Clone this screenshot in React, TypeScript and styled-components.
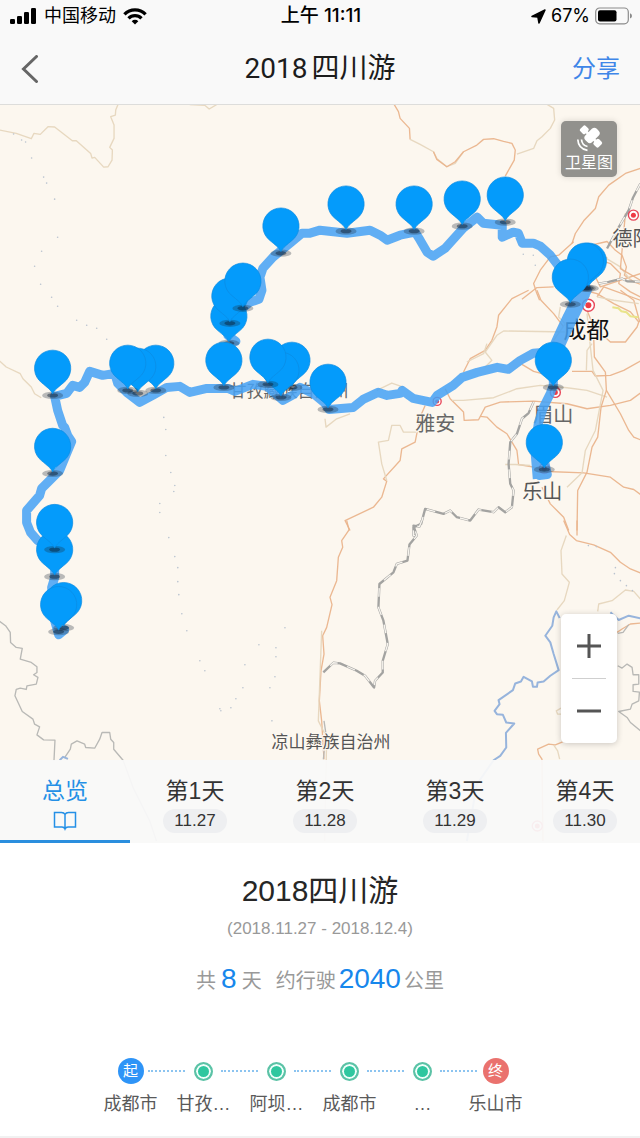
import React, { useState } from "react";
import styled, { createGlobalStyle } from "styled-components";

const latin = '"Liberation Sans", "Noto Sans CJK SC", sans-serif';
const system = 'Inter, "Noto Sans CJK SC", sans-serif';
const heading = 'Roboto, "Noto Sans CJK SC", sans-serif';

const GlobalStyle = createGlobalStyle`
  *, *::before, *::after { box-sizing: border-box; }
  body { margin: 0; background: #fff; font-family: ${latin}; color: #2b2b2b; }
  button { border: 0; padding: 0; margin: 0; background: none; font: inherit; color: inherit; cursor: pointer; }
`;

const Page = styled.div`
  display: flex;
  flex-direction: column;
  min-height: 100vh;
`;

const TopBar = styled.header`
  background: #f9f9f9;
  border-bottom: 1px solid #dddddb;
`;

const StatusBar = styled.div`
  display: grid;
  grid-template-columns: 1fr auto 1fr;
  align-items: center;
  height: 32px;
  padding: 0 8px 0 10px;
  font-family: ${system};
  font-size: 18px;
  line-height: 24px;
  color: #000;
`;

const StatusGroup = styled.div<{ $end?: boolean }>`
  display: flex;
  align-items: center;
  justify-content: ${(p) => (p.$end ? "flex-end" : "flex-start")};
  gap: ${(p) => (p.$end ? 5 : 7)}px;
`;

const Clock = styled.time`
  font-size: 19px;
  font-weight: 500;
`;

const NavBar = styled.nav`
  display: grid;
  grid-template-columns: 1fr auto 1fr;
  align-items: center;
  height: 72px;
  padding: 2px 20px 0;
`;

const BackButton = styled.button`
  justify-self: start;
  display: flex;
`;

const NavTitle = styled.h1`
  display: flex;
  gap: 4px;
  margin: 0;
  font-family: ${heading};
  font-size: 28px;
  line-height: 40px;
  font-weight: 400;
  color: #1c1c1c;
`;

const ShareLink = styled.a`
  justify-self: end;
  font-size: 24px;
  line-height: 32px;
  color: #3f86e8;
  text-decoration: none;
`;

const MapArea = styled.section`
  position: relative;
  flex: 1 0 480px;
  overflow: hidden;
  background: #fcf7ef;
`;

const MapCanvas = styled.svg`
  position: absolute;
  inset: 0;
  width: 100%;
  height: 100%;
  font-family: "Noto Sans CJK SC", sans-serif;
`;

const SatelliteButton = styled.button`
  position: absolute;
  top: 16px;
  right: 23px;
  display: flex;
  flex-direction: column;
  align-items: center;
  width: 56px;
  height: 56px;
  padding-top: 4px;
  border-radius: 5px;
  background: #92918d;
  box-shadow: 0 0 6px rgba(0, 0, 0, 0.15);
  color: #fff;
  font-size: 16px;
  line-height: 20px;
`;

const ZoomBox = styled.div`
  position: absolute;
  right: 23px;
  bottom: 100px;
  display: flex;
  flex-direction: column;
  align-items: center;
  width: 56px;
  border-radius: 5px;
  background: #fff;
  box-shadow: 0 1px 6px rgba(0, 0, 0, 0.2);
`;

const ZoomButton = styled.button`
  display: flex;
  align-items: center;
  justify-content: center;
  width: 100%;
  height: 64px;
`;

const ZoomDivider = styled.span`
  width: 34px;
  height: 1px;
  background: #cfcfcf;
`;

const Tabs = styled.div`
  position: absolute;
  left: 0;
  right: 0;
  bottom: 0;
  display: flex;
  overflow-x: auto;
  scrollbar-width: none;
  background: rgba(249, 249, 249, 0.94);
`;

const Tab = styled.button<{ $active: boolean }>`
  flex: 0 0 130px;
  display: flex;
  flex-direction: column;
  align-items: center;
  height: 83px;
  padding-top: 15px;
  border-bottom: 3px solid ${(p) => (p.$active ? "#2a8ede" : "transparent")};
  color: ${(p) => (p.$active ? "#2490e6" : "#333")};
`;

const TabLabel = styled.span`
  font-size: 23px;
  line-height: 32px;
`;

const TabBadge = styled.span<{ $filled: boolean }>`
  display: flex;
  align-items: center;
  justify-content: center;
  width: 64px;
  height: 24px;
  margin-top: 2px;
  border-radius: 12px;
  background: ${(p) => (p.$filled ? "#eeeff1" : "transparent")};
  font-size: 17px;
  line-height: 24px;
`;

const Summary = styled.main`
  display: flex;
  flex-direction: column;
  align-items: center;
  padding: 24px 0 19px;
  border-bottom: 2px solid #f1f1f1;
  background: #fff;
`;

const TripTitle = styled.h2`
  margin: 0;
  font-size: 30px;
  line-height: 48px;
  font-weight: 400;
  color: #262626;
`;

const TripDates = styled.p`
  margin: 0;
  font-size: 17px;
  line-height: 28px;
  color: #999;
`;

const Stats = styled.div`
  display: flex;
  align-items: baseline;
  gap: 4px;
  margin-top: 16px;
  font-size: 20px;
  line-height: 40px;
  color: #999;
`;

const Stat = styled.p<{ $gap: number }>`
  display: flex;
  align-items: baseline;
  gap: ${(p) => p.$gap}px;
  margin: 0 5px;
`;

const Figure = styled.strong`
  font-size: 28px;
  font-weight: 400;
  color: #1787ec;
`;

const Steps = styled.ol`
  display: flex;
  margin: 57px 14px 0 0;
  padding: 0;
  list-style: none;
`;

const Step = styled.li`
  position: relative;
  display: flex;
  flex-direction: column;
  align-items: center;
  width: 73px;

  &:not(:last-child)::after {
    content: "";
    position: absolute;
    top: 12px;
    left: 54px;
    width: 37px;
    border-top: 2px dotted #8cc4f0;
  }
`;

const StepMark = styled.span<{ $color?: string }>`
  display: flex;
  align-items: center;
  justify-content: center;
  width: 26px;
  height: 26px;
  border-radius: 50%;
  background: ${(p) => p.$color ?? "transparent"};
  color: #fff;
  font-size: 15px;
  line-height: 26px;
`;

const StepDot = styled.span`
  width: 19px;
  height: 19px;
  border: 2px solid #5cc2a6;
  border-radius: 50%;
  background: #2fc79f;
  box-shadow: inset 0 0 0 2px #f1fffb;
`;

const StepName = styled.span`
  margin-top: 7px;
  font-size: 18px;
  line-height: 26px;
  color: #5a5a5a;
`;

/* Road geometry, stored per tile at three units to the pixel. */
type Kind = "main" | "minor" | "rail" | "river" | "border";
type Tile = { x: number; y: number; lines: [Kind, string][] };

const kinds: Record<Kind, { color: string; width: number; opacity: number }> = {
  main: { color: "#eab48c", width: 4, opacity: 0.95 },
  minor: { color: "#e6d6bd", width: 4, opacity: 0.95 },
  rail: { color: "#a3a3a1", width: 7, opacity: 1 },
  river: { color: "#97b4dc", width: 6, opacity: 1 },
  border: { color: "#b9b9b6", width: 4, opacity: 1 },
};

const tiles: Tile[] = [
  {
    x: 0,
    y: 100,
    lines: [
      ["minor", "0,90 50,100 95,116 103,100 122,103 145,80 165,81 218,122 230,122 273,160 277,174 285,172 312,201 325,200 337,180 338,150 330,142 343,115 343,75 333,50 347,45 348,30 355,13"],
      ["minor", "570,14 615,16 628,27 650,14"],
      ["minor", "0,782 20,800 62,820 70,835 95,860 105,880 125,892"],
    ],
  },
  {
    x: 320,
    y: 100,
    lines: [
      ["main", "222,13 235,35 240,55 268,85 270,118"],
      ["minor", "270,118 300,133 340,155 350,175 380,200 405,190 430,155"],
      ["main", "340,155 350,178 380,200 405,185 430,155 470,135 490,118 520,116 550,124 575,130 585,150 582,180 555,228"],
      ["minor", "680,13 700,25 703,60 690,85 665,110 650,122 640,145 590,162"],
      ["main", "960,205 915,220 865,255 835,290 825,325 790,362 765,400 755,430"],
      ["main", "760,425 715,465 690,470 660,510 640,550 648,575 658,600"],
      ["main", "700,560 650,562 605,597"],
      ["main", "790,440 860,424 885,450 905,465 918,500 912,525 940,545 960,552"],
      ["main", "840,480 870,490 900,520 895,550 930,575 960,590"],
      ["main", "830,590 850,560 960,600"],
      ["main", "860,470 820,520 840,560 960,520"],
      ["minor", "850,470 900,500 930,540"],
      ["main", "960,540 900,505 915,340"],
      ["rail", "960,250 938,292 925,330 890,390 860,445"],
      ["rail", "835,550 865,545 905,535 920,543 960,545"],
    ],
  },
  {
    x: 320,
    y: 290,
    lines: [
      ["main", "625,0 575,25 535,75 530,110 515,150 495,180 450,205 430,245"],
      ["minor", "745,125 550,122 530,135 495,185 515,210 495,230"],
      ["minor", "500,160 490,190 440,215"],
      ["main", "650,0 662,30 700,70 730,110"],
      ["main", "605,222 640,243 665,250"],
      ["main", "755,243 815,243 825,257 870,255 910,240 960,212"],
      ["main", "375,295 390,325 430,365 432,390 475,388 495,350 540,335 640,332 740,340 800,355 870,345 930,330 960,308"],
      ["minor", "395,330 430,330 520,322 590,295 660,285 740,292 800,300 860,320"],
      ["main", "480,378 500,380 530,410 560,430 572,450 590,480 595,522 640,530 680,543 790,547 870,560 910,590 940,597 960,612"],
      ["main", "820,140 822,200 855,245 858,300 900,370 925,420 940,440 960,448"],
      ["main", "858,300 842,350 832,440 815,470 800,545 772,600 770,720"],
      ["minor", "800,70 808,150 818,240 848,300 825,420 795,480 785,547 740,590"],
      ["minor", "815,160 800,180 798,240"],
      ["main", "665,590 690,640 730,680 745,720"],
      ["main", "315,345 300,380 285,455 245,475 240,510 190,565 200,572 185,620 160,650 75,690 90,720"],
      ["minor", "290,425 250,425 240,405 215,405 205,450 175,455 185,520 200,570"],
      ["minor", "170,300 215,278 250,290"],
      ["minor", "90,370 50,385 18,410 15,385"],
      ["main", "790,0 830,10 880,40 930,65 955,95 950,110 915,155 870,155 820,110 800,60"],
      ["main", "900,0 940,30 958,95"],
      ["minor", "830,20 880,30 955,40"],
      ["minor", "555,522 585,522 630,525"],
      ["minor", "720,50 715,80 735,100 700,150"],
      ["rail", "640,335 625,368 605,385 590,430 570,455 565,520 570,580 580,600 575,650 555,665 535,650 520,665 475,657 450,690 410,680 390,660 370,670 315,655 303,700 280,710 280,735 290,735"],
    ],
  },
  {
    x: 320,
    y: 520,
    lines: [
      ["rail", "305,0 298,18 280,15 290,45 268,72 262,120 230,130 220,155 178,190 175,260 190,300 203,370 188,420 188,455 165,480 162,500 135,465 110,450 60,428 40,426 10,455"],
      ["main", "80,0 87,28 65,60 68,80 55,110 50,180 30,230 36,252 20,320 8,345 12,400 3,450 -2,540 5,600 12,715"],
      ["minor", "5,330 -2,520 -5,600 20,650 14,960"],
      ["border", "12,600 18,640 10,715"],
      ["main", "730,0 748,42 768,60 820,73 870,95 900,125 930,145 960,157"],
      ["main", "770,0 770,45"],
      ["minor", "738,45 722,90 725,160 747,185 732,240 710,268"],
      ["minor", "832,272 835,250 875,240 915,208 940,212 960,235"],
      ["river", "718,292 708,272 700,290 696,315 675,345 690,365 700,400 715,448 690,465 670,482 652,485 650,498 638,498 635,482 610,468 602,482 585,488 578,508 535,538 538,550 523,570 530,580 548,582 558,605 582,608 557,636 558,680 540,705 520,718 470,790 440,960"],
      ["river", "870,275 895,298 925,285 960,293"],
      ["main", "890,335 905,325 930,310 960,307"],
      ["border", "892,338 908,335 925,312"],
      ["border", "892,435 905,442 920,430 935,440 938,462 955,462 955,490 938,492 938,512 957,514 955,540 935,550 930,565 895,572 920,590 930,605 960,630"],
      ["main", "727,663 705,672 685,670 652,685 655,700 665,715 668,960"],
      ["minor", "700,672 712,690 718,715"],
      ["minor", "722,562 708,570 712,580 722,580"],
    ],
  },
  {
    x: 0,
    y: 420,
    lines: [
      ["border", "0,602 18,615 32,635 33,665 50,680 68,683 62,715 95,725 112,738 112,755 102,762 115,770 110,790 82,795 80,806 62,802 50,806 46,825 68,872 100,895 105,910 120,918 112,942 132,957 166,958 163,1020"],
      ["border", "195,1010 212,985 215,970 232,960 255,970 258,980 285,982 300,955 307,935 330,935 333,955 342,965 342,985 370,1018 400,1100 450,1200 470,1260"],
      ["river", "180,1018 190,1008 205,1014"],
    ],
  },
];

const specks = [
  [14, 134], [22, 140], [26, 142], [32, 158], [44, 177], [47, 183], [55, 199], [58, 237], [42, 251],
  [35, 266], [41, 284], [52, 297], [58, 306], [77, 320], [87, 325], [97, 328], [107, 339], [164, 417],
  [166, 429], [166, 455], [171, 472], [175, 485], [174, 491], [160, 503], [160, 512], [169, 537],
  [175, 556], [178, 567], [178, 581], [179, 594], [182, 613], [187, 630], [200, 660], [205, 670],
  [220, 708], [221, 710], [231, 707], [236, 698], [243, 687], [245, 664], [259, 644], [276, 647],
  [276, 656], [275, 676], [285, 627], [270, 687], [272, 720], [523, 254], [535, 265], [533, 255],
  [615, 567], [614, 573], [620, 580], [626, 585], [632, 590], [596, 546], [588, 545],
];

/* One continuous path, so that overlapping legs keep an even tint. */
const route =
  "M587 290L580 303 571 318 563 333 556 345 553 360 553 385 550 393 543 407 538 423 535 445 539 475 547 474 543 455 540 430" +
  "M586 288L575 280 560 268 550 255 540 246 533 243 522 243 518 233 513 232 502 237 502 225 483 223 477 217 463 228 445 248 433 256 427 252 420 240 415 232 400 235 387 240 380 235 370 230 347 233 320 230 310 233 302 233 290 243 273 257 263 268 260 277 262 290 259 299 250 302 240 310 230 320 228 335 236 341" +
  "M556 345L545 352 533 353 520 360 508 369 497 367 477 372 462 377 453 385 437 395 432 402 413 398 402 390 400 393 387 395 378 392 363 399 353 407 329 409 325 403 313 393 300 387 294 394 283 400 267 386 253 384 235 391 228 388 207 388 190 392 180 386 167 387 153 395 140 402 127 392 118 383 115 373 103 375 90 371 85 382 80 387 73 385 67 393 55 396 58 410 63 425 65 427 68 435 72 441 67 453 60 470 52 478 42 488 40 495 27 510 27 522 31 532 38 540 55 549 55 577 52 587 55 620 59 634 65 629";

const wideRoute = "M583 292L577 303 570 317 562 334 557 345M537 442L540 478";

const places = [
  { name: "甘孜藏族自治州", x: 289, y: 397, size: 17, color: "#666" },
  { name: "雅安", x: 435, y: 431, size: 20, color: "#666" },
  { name: "眉山", x: 553, y: 422, size: 20, color: "#666" },
  { name: "乐山", x: 542, y: 498, size: 20, color: "#555" },
  { name: "成都", x: 586, y: 338, size: 23, color: "#111" },
  { name: "德阳", x: 632, y: 246, size: 20, color: "#555" },
  { name: "凉山彝族自治州", x: 331, y: 747, size: 17, color: "#555" },
];

const towns = [
  { x: 633, y: 215, r: 5 },
  { x: 588, y: 305, r: 6 },
  { x: 437, y: 401, r: 4 },
  { x: 555, y: 392, r: 5 },
  { x: 544, y: 468, r: 5 },
  { x: 537, y: 825, r: 5 },
];

const pins = [
  [281, 226], [346, 204], [414, 204], [462, 199], [505, 195], [588, 261], [585, 261], [570, 277],
  [229, 316], [230, 296], [243, 281], [224, 360], [53, 368], [156, 363], [138, 366], [128, 363],
  [292, 360], [281, 370], [268, 357], [328, 382], [553, 360], [544, 442], [53, 446], [55, 549],
  [55, 522], [64, 600], [59, 604],
];

const RouteMap = () => (
  <MapCanvas viewBox="0 105 640 737" preserveAspectRatio="xMidYMid slice" role="img" aria-label="行程路线">
    {tiles.map((t, i) => (
      <g key={i} transform={`translate(${t.x} ${t.y}) scale(0.33333)`} fill="none" strokeLinejoin="round">
        {t.lines.map(([kind, points], n) => (
          <g key={n} opacity={kinds[kind].opacity}>
            <polyline points={points} stroke={kinds[kind].color} strokeWidth={kinds[kind].width} />
            {kind === "rail" && <polyline points={points} stroke="#f7f4ee" strokeWidth={4} strokeDasharray="26 30" />}
          </g>
        ))}
      </g>
    ))}
    <path d="M612 307l6 1 3 3 5 1 4 4 8 1" fill="none" stroke="#e9e48a" strokeWidth="2" />
    {specks.map(([x, y], i) => (
      <circle key={i} cx={x} cy={y} r="0.8" fill="#b9c3cf" />
    ))}
    {towns.map((t, i) => (
      <g key={i}>
        <circle cx={t.x} cy={t.y} r={t.r} fill="#fff" stroke="#e8485a" strokeWidth="1.4" />
        <circle cx={t.x} cy={t.y} r={t.r / 2} fill="#ee3b45" />
      </g>
    ))}
    {places.map((p) => (
      <text
        key={p.name}
        x={p.x}
        y={p.y}
        fontSize={p.size}
        fill={p.color}
        stroke="#fcf7ef"
        strokeWidth="2"
        paintOrder="stroke"
        textAnchor="middle"
      >
        {p.name}
      </text>
    ))}
    <g fill="none" stroke="#46a2f4" strokeLinejoin="round" opacity="0.86">
      <path d={route} strokeWidth="9" strokeLinecap="round" />
      <path d={wideRoute} strokeWidth="15" />
    </g>
    {pins.map(([x, y], i) => (
      <g key={i} transform={`translate(${x} ${y})`}>
        <ellipse cy="27" rx="10.5" ry="3.6" fill="#1d2b38" opacity="0.3" />
        <ellipse cy="27" rx="5.5" ry="2.2" fill="#0a1a2c" opacity="0.45" />
        <path
          d="M0 25.5C-1.6 21.6-6 18.600-11 14.300A18.100 18.100 0 1 1 11 14.300C6 18.600 1.600 21.600 0 25.500Z"
          fill="#049bfb"
          stroke="#0b8be2"
          strokeWidth="0.7"
        />
      </g>
    ))}
  </MapCanvas>
);

const SignalIcon = () => (
  <svg width="27" height="16" viewBox="0 0 27 16" aria-hidden="true">
    <rect x="0" y="11" width="5" height="5" rx="1.300" />
    <rect x="7" y="8" width="5" height="8" rx="1.300" />
    <rect x="14" y="4" width="5" height="12" rx="1.300" />
    <rect x="21" y="0" width="5" height="16" rx="1.300" />
  </svg>
);

const WifiIcon = () => (
  <svg width="24" height="17" viewBox="0 0 24 17" fill="none" stroke="#000" strokeWidth="3.300" aria-hidden="true">
    <path d="M1.400 6.300A15 15 0 0 1 22.600 6.300" />
    <path d="M5.500 10.300A9.200 9.200 0 0 1 18.500 10.300" />
    <path d="M12 16.500L8.700 13.200A4.700 4.700 0 0 1 15.300 13.200Z" fill="#000" stroke="none" />
  </svg>
);

const LocationIcon = () => (
  <svg width="15" height="15" viewBox="0 0 15 15" aria-hidden="true">
    <path d="M14 1L8 14L6.900 8.100L1 7.400Z" stroke="#000" strokeWidth="1.500" strokeLinejoin="round" />
  </svg>
);

const BatteryIcon = () => (
  <svg width="37" height="18" viewBox="0 0 37 18" aria-hidden="true">
    <rect x="0.700" y="1" width="32.600" height="15.800" rx="4" fill="none" stroke="#8b8b8b" strokeWidth="1.200" />
    <rect x="3" y="3.200" width="18.500" height="11.400" rx="2" />
    <path d="M35 6.200Q37 7 37 8.900T35 11.600Z" fill="#8b8b8b" />
  </svg>
);

const SatelliteIcon = () => (
  <svg width="28" height="28" viewBox="0 0 28 28" fill="none" aria-hidden="true">
    <g transform="translate(16 11.500) rotate(-45)" fill="#fff">
      <rect x="-6.500" y="-4.800" width="16" height="9.600" rx="3.500" />
      <rect x="-3.800" y="-13" width="7.600" height="7" rx="1.800" />
      <rect x="-3.800" y="6" width="7.600" height="7" rx="1.800" />
      <rect x="-1.500" y="-7" width="3" height="14" />
    </g>
    <path d="M6.500 14.500Q7 20.300 12.500 21.500" stroke="#fff" strokeWidth="1.700" />
    <path d="M2.800 14.500Q3.300 24 12.500 25.300" stroke="#fff" strokeWidth="1.700" />
  </svg>
);

const BookIcon = () => (
  <svg width="24" height="20" viewBox="0 0 24 20" fill="none" stroke="currentColor" strokeWidth="1.500" aria-hidden="true">
    <path d="M12 3.500Q11 1.500 8.500 1.500H1.500V16H9Q11.200 16 12 18Q12.800 16 15 16H22.500V1.500H15.500Q13 1.500 12 3.500ZM12 3.500V18" />
  </svg>
);

const days = [
  { label: "总览" },
  { label: "第1天", date: "11.27" },
  { label: "第2天", date: "11.28" },
  { label: "第3天", date: "11.29" },
  { label: "第4天", date: "11.30" },
];

const stops = [
  { name: "成都市", mark: "起", color: "#2e94f7" },
  { name: "甘孜…" },
  { name: "阿坝…" },
  { name: "成都市" },
  { name: "…" },
  { name: "乐山市", mark: "终", color: "#ea726e" },
];

export default function App() {
  const [active, setActive] = useState(0);

  return (
    <>
      <GlobalStyle />
      <Page>
        <TopBar>
          <StatusBar>
            <StatusGroup>
              <SignalIcon />
              <span>中国移动</span>
              <WifiIcon />
            </StatusGroup>
            <Clock>上午 11:11</Clock>
            <StatusGroup $end>
              <LocationIcon />
              <span>67%</span>
              <BatteryIcon />
            </StatusGroup>
          </StatusBar>
          <NavBar>
            <BackButton aria-label="返回">
              <svg width="20" height="28" viewBox="0 0 20 28" fill="none" stroke="#666" strokeWidth="3" strokeLinecap="round">
                <path d="M16.500 1.500L3.500 14L16.500 26.500" />
              </svg>
            </BackButton>
            <NavTitle>
              <span>2018</span>
              <span>四川游</span>
            </NavTitle>
            <ShareLink href="#share">分享</ShareLink>
          </NavBar>
        </TopBar>

        <MapArea>
          <RouteMap />
          <SatelliteButton>
            <SatelliteIcon />
            卫星图
          </SatelliteButton>
          <ZoomBox>
            <ZoomButton aria-label="放大">
              <svg width="24" height="24" viewBox="0 0 24 24" stroke="#555" strokeWidth="3">
                <path d="M0 12H24M12 0V24" />
              </svg>
            </ZoomButton>
            <ZoomDivider />
            <ZoomButton aria-label="缩小">
              <svg width="24" height="24" viewBox="0 0 24 24" stroke="#555" strokeWidth="3">
                <path d="M0 12H24" />
              </svg>
            </ZoomButton>
          </ZoomBox>
          <Tabs role="tablist">
            {days.map((d, i) => (
              <Tab key={d.label} role="tab" aria-selected={i === active} $active={i === active} onClick={() => setActive(i)}>
                <TabLabel>{d.label}</TabLabel>
                <TabBadge $filled={!!d.date}>{d.date ?? <BookIcon />}</TabBadge>
              </Tab>
            ))}
          </Tabs>
        </MapArea>

        <Summary>
          <TripTitle>2018四川游</TripTitle>
          <TripDates>(2018.11.27 - 2018.12.4)</TripDates>
          <Stats>
            <Stat $gap={5}>
              共<Figure>8</Figure>天
            </Stat>
            <Stat $gap={3}>
              约行驶<Figure>2040</Figure>公里
            </Stat>
          </Stats>
          <Steps>
            {stops.map((s, i) => (
              <Step key={i}>
                <StepMark $color={s.color}>{s.mark ?? <StepDot />}</StepMark>
                <StepName>{s.name}</StepName>
              </Step>
            ))}
          </Steps>
        </Summary>
      </Page>
    </>
  );
}
